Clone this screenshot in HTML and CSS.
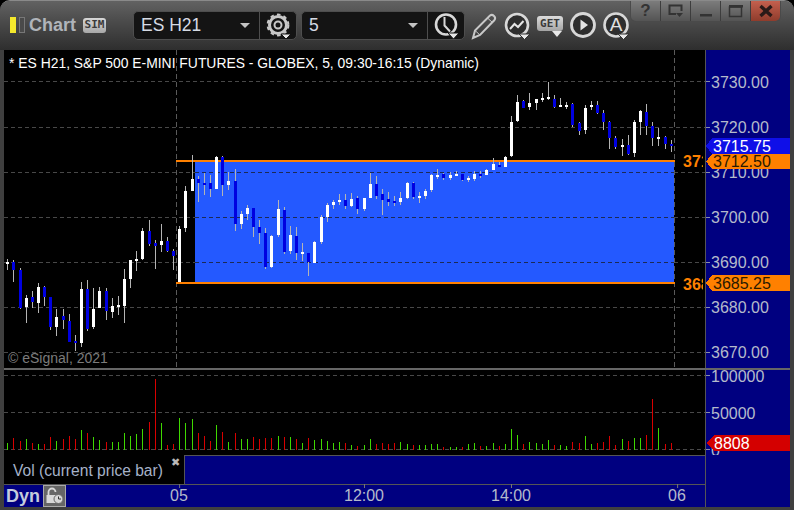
FILE: index.html
```html
<!DOCTYPE html>
<html lang="en">
<head>
<meta charset="utf-8">
<title>Chart ES H21</title>
<link rel="stylesheet" href="styles.css">
</head>
<body>
<main class="window">
  <header class="toolbar">
    <div class="brand">
      <span class="led led-on"></span>
      <span class="led"></span>
      <span class="brand-name">Chart</span>
      <span class="sim">SIM</span>
    </div>
    <div class="combo combo-symbol">
      <span class="combo-text">ES H21</span>
      <span class="caret"></span>
      <span class="combo-btn">
        <svg class="icon" width="36" height="27" viewBox="0 0 36 27">
          <circle cx="18" cy="13" r="8.500" fill="none" stroke="#c8c8c8" stroke-width="3"/>
          <circle cx="18" cy="13" r="10.400" fill="none" stroke="#c8c8c8" stroke-width="2" stroke-dasharray="3.600 3.200"/>
          <circle cx="18" cy="13" r="3.500" fill="none" stroke="#c8c8c8" stroke-width="2"/>
          <path d="M21 22h10l-5 5z" fill="#e8e8e8" stroke="#141414" stroke-width="1"/>
        </svg>
      </span>
    </div>
    <div class="combo combo-interval">
      <span class="combo-text">5</span>
      <span class="caret"></span>
      <span class="combo-btn">
        <svg class="icon" width="36" height="27" viewBox="0 0 36 27">
          <circle cx="18" cy="12.500" r="10" fill="none" stroke="#d8d8d8" stroke-width="2.600"/>
          <path d="M16.500 5v8.500l5.500 6" fill="none" stroke="#d8d8d8" stroke-width="2"/>
          <path d="M20 21h11l-5.500 6z" fill="#e8e8e8" stroke="#141414" stroke-width="1"/>
        </svg>
      </span>
    </div>
    <svg class="tool" width="28" height="28" viewBox="0 0 28 28">
      <path d="M3 26l2-7.500L20 3.500q2-1.500 4 .5t.5 4L10 23z" fill="none" stroke="#c8c8c8" stroke-width="2"/>
      <path d="M5 18.500l5 4.500M17.500 6l5 4.500" fill="none" stroke="#c8c8c8" stroke-width="1"/>
    </svg>
    <svg class="tool" width="28" height="28" viewBox="0 0 28 28">
      <circle cx="14" cy="13" r="11" fill="#2e2e2e" stroke="#d8d8d8" stroke-width="2.600"/>
      <path d="M7 17l4.500-5 3.500 3 5.500-6" fill="none" stroke="#e4e4e4" stroke-width="2"/>
      <path d="M16 22h11l-5.500 5.500z" fill="#e8e8e8" stroke="#333" stroke-width="1"/>
    </svg>
    <span class="get">
      <span class="get-text">GET</span>
      <svg class="get-arrow" width="10" height="6" viewBox="0 0 10 6"><path d="M0 0h10l-5 6z" fill="#e8e8e8"/></svg>
    </span>
    <svg class="tool" width="28" height="28" viewBox="0 0 28 28">
      <circle cx="14" cy="13" r="11.500" fill="#2e2e2e" stroke="#d8d8d8" stroke-width="2.800"/>
      <path d="M11.500 7.500l7.500 5.500-7.500 5.500z" fill="#e4e4e4"/>
    </svg>
    <span class="auto">
      <svg class="auto-ring" width="28" height="28" viewBox="0 0 28 28">
        <circle cx="14" cy="13" r="11.500" fill="#2e2e2e" stroke="#d8d8d8" stroke-width="2.600"/>
        <path d="M16 22h11l-5.500 5.500z" fill="#e8e8e8" stroke="#333" stroke-width="1"/>
      </svg>
      <span class="auto-letter">A</span>
    </span>
    <nav class="winctl">
      <span class="winbtn winbtn-text">?</span>
      <span class="winbtn">
        <svg width="16" height="14" viewBox="0 0 16 14"><path d="M8 10H1.500V1.500h12V7" fill="none" stroke="#333" stroke-width="2"/><path d="M8 9h7l-3.500 4z" fill="#333"/></svg>
      </span>
      <span class="winbtn">
        <svg width="16" height="14" viewBox="0 0 16 14"><path d="M2 10h12v2.500H2z" fill="#333"/></svg>
      </span>
      <span class="winbtn">
        <svg width="16" height="14" viewBox="0 0 16 14"><path d="M1.500 3v9.500h12V3z" fill="none" stroke="#333" stroke-width="1.500"/><path d="M1 1h14v2.500H1z" fill="#333"/></svg>
      </span>
      <span class="winbtn winbtn-close">
        <svg width="16" height="14" viewBox="0 0 16 14"><path d="M2.500 2l11 10M13.500 2l-11 10" stroke="#2a1a18" stroke-width="3.400" fill="none"/></svg>
      </span>
    </nav>
  </header>

  <section class="chart">
    <div class="pane-row pane-price">
      <svg class="plot" width="701" height="318" viewBox="4 50 701 318">
        <rect class="zone" x="195" y="162" width="479" height="120"/>
        <path class="grid" d="M4 81.500H705M4 127.500H705M4 172.500H195M674 172.500H705M4 217.500H195M674 217.500H705M4 262.500H195M674 262.500H705M4 307.500H705M4 352.500H705"/>
        <path class="grid-zone" d="M195 172.500H674M195 217.500H674M195 262.500H674"/>
        <path class="vline" d="M176.500 50V368M674.500 50V368"/>
        <rect class="level" x="176" y="160" width="499" height="2"/>
        <rect class="level" x="176" y="282" width="499" height="2"/>
        <g transform="translate(.5 160)">
          <path class="wick" d="M7 99V110M13 100V122M20 108V149M26 135V163M32 131V148M38 123V153M44 126V146M50 137V170M56 149V176M63 149V169M69 154V182M75 175V191M81 122V187M87 120V171M93 128V169M99 127V148M106 128V160M112 138V158M118 136V155M124 109V163M130 100V128M136 91V111M142 68V100M149 60V86M155 80V109M161 64V92M167 77V92M173 89V110M179 66V122M185 26V72M192 -5V31M198 16V42M204 13V35M210 15V37M216 -4V29M222 -4V36M228 12V30M235 9V71M241 51V69M247 45V60M253 48V77M259 60V84M265 68V109M271 75V108M278 40V77M284 47V94M290 66V94M296 67V100M302 83V101M308 93V116M314 81V103M321 55V84M327 43V62M333 40V49M339 34V45M345 34V49"/>
          <path class="body-up" d="M7 102V104M26 138V147M38 127V143M56 157V167M81 129V183M93 149V167M99 131V148M112 146V152M118 145V147M124 119V146M130 100V119M136 99V101M142 71V99M161 81V85M179 69V122M185 31V68M192 19V31M216 -3V29M228 21V25M241 54V64M247 48V54M271 76V107M278 49V75M290 75V91M302 92V94M314 82V103M321 57V82M327 45V57M333 42V45M339 40V42"/>
          <path class="body-down" d="M13 102V110M20 110V148M32 137V142M44 127V137M50 137V167M63 156V160M69 161V182M75 181V183M87 129V169M106 131V151M149 71V84M155 83V86M167 81V91M173 91V96M198 19V23M204 23V25M210 23V29M222 -3V25M235 21V64M253 48V67M259 67V73M265 73V107M284 50V92M296 76V93M308 93V102M345 40V46"/>
        </g>
        <g transform="translate(.5 70)">
          <path class="wick" d="M351 123V137M357 126V144M364 128V141M370 103V128M376 106V129M382 119V145M388 122V136M394 126V136M400 122V135M407 112V129M413 112V129M419 122V133M425 119V129M431 104V122M437 99V109M443 103V110M450 102V110M456 101V106M462 104V111M468 106V112M474 101V111M480 101V108M486 99V105M493 88V100M499 92V97M505 86V97M511 46V87M517 25V52M523 30V38M529 23V40M536 29V40M542 23V32M548 12V30M554 25V38M560 28V37M566 32V39M572 33V57M579 52V65M585 35V64M591 31V40M597 31V44M603 40V60M609 51V79M615 66V79M622 69V86M628 65V85M634 50V87M640 40V65M646 34V65M652 52V76M658 58V76M665 66V79M671 70V82"/>
          <path class="body-up" d="M351 129V136M364 128V139M370 114V128M400 128V132M407 113V128M419 126V128M425 121V126M431 105V120M437 105V107M450 105V108M456 104V106M468 108V110M474 104V109M486 100V105M493 94V100M505 87V97M511 52V86M517 32V51M529 33V37M536 29V33M542 28V30M548 27V29M560 35V37M566 35V37M585 38V60M591 35V37M622 75V77M634 52V83M640 41V52M658 67V69"/>
          <path class="body-down" d="M357 128V139M376 114V126M382 124V130M388 129V132M394 131V133M413 113V127M443 104V108M462 104V110M480 104V106M499 95V97M523 31V38M554 29V37M572 34V55M579 53V61M597 35V43M603 43V52M609 52V68M615 68V77M628 75V84M646 42V56M652 56V68M665 67V74M671 74V76"/>
        </g>
        <text class="chart-title" x="9" y="68">* ES H21, S&amp;P 500 E-MINI FUTURES - GLOBEX, 5, 09:30-16:15 (Dynamic)</text>
        <text class="copyright" x="8" y="363">© eSignal, 2021</text>
        <svg x="683" y="150" width="20" height="22" viewBox="683 150 20 22"><text class="level-label" x="683" y="167">3712.50</text></svg>
        <svg x="683" y="272" width="20" height="22" viewBox="683 272 20 22"><text class="level-label" x="683" y="290">3685.25</text></svg>
      </svg>
      <svg class="axis" width="84" height="318" viewBox="706 50 84 318">
        <path class="tick" d="M706 81.500h4M706 127.500h4M706 172.500h4M706 217.500h4M706 262.500h4M706 307.500h4M706 352.500h4"/>
        <text class="axis-label" x="711" y="88">3730.00</text>
        <text class="axis-label" x="711" y="133">3720.00</text>
        <text class="axis-label" x="711" y="178">3710.00</text>
        <text class="axis-label" x="711" y="223">3700.00</text>
        <text class="axis-label" x="711" y="268">3690.00</text>
        <text class="axis-label" x="711" y="313">3680.00</text>
        <text class="axis-label" x="711" y="358">3670.00</text>
        <path class="tag-blue" d="M706 146l6-8h78v16h-78z"/>
        <text class="tag-text" x="713" y="152">3715.75</text>
        <path class="tag-orange" d="M706 161.500l6-7.500h78v15h-78z"/>
        <text class="tag-text-dark" x="713" y="167">3712.50</text>
        <path class="tag-orange" d="M706 283l6-8h78v16h-78z"/>
        <text class="tag-text-dark" x="713" y="289">3685.25</text>
      </svg>
    </div>
    <div class="pane-row pane-vol">
      <svg class="plot" width="701" height="85" viewBox="4 370 701 85">
        <path class="grid" d="M4 375.500H705M4 412.500H705M4 449.500H705"/>
        <g transform="translate(.5 365)">
          <path class="vol-up" d="M7 78V85M26 74V85M38 79V85M56 76V85M81 65V85M93 72V85M99 75V85M112 77V85M118 77V85M124 68V85M130 71V85M136 69V85M142 64V85M161 58V85M179 53V85M185 58V85M192 54V85M216 60V85M228 77V85M241 74V85M247 74V85M278 71V85M290 72V85M302 78V85M314 75V85M321 74V85M327 76V85M333 78V85M339 77V85M351 80V85M364 80V85M370 74V85M400 77V85M407 79V85M419 80V85M425 80V85M431 79V85M437 79V85M450 82V85M456 82V85M468 79V85M474 78V85M486 81V85M493 78V85M505 79V85M511 64V85M517 70V85M529 77V85M536 78V85M542 79V85M548 75V85M560 80V85M566 81V85M585 71V85M591 79V85M622 74V85M634 73V85M640 73V85M658 63V85"/>
          <path class="vol-down" d="M13 73V85M20 76V85M32 78V85M44 79V85M50 72V85M63 74V85M69 71V85M75 74V85M87 68V85M106 77V85M149 57V85M155 14V85M167 80V85M173 79V85M198 68V85M204 71V85M210 76V85M222 67V85M235 68V85M253 72V85M259 74V85M265 73V85M271 73V85M284 72V85M296 74V85M308 73V85M345 78V85M357 81V85M376 79V85M382 78V85M388 79V85M394 78V85M413 80V85M443 82V85M462 82V85M480 81V85M499 81V85M523 79V85M554 80V85M572 77V85M579 78V85M597 78V85M603 77V85M609 71V85M615 80V85M628 76V85M646 70V85M652 34V85M665 79V85M671 78V85"/>
        </g>
      </svg>
      <svg class="axis" width="84" height="85" viewBox="706 370 84 85">
        <path class="tick" d="M706 375.500h4M706 412.500h4M706 449.500h4"/>
        <text class="axis-label" x="711" y="382">100000</text>
        <text class="axis-label" x="711" y="419">50000</text>
        <text class="axis-label" x="711" y="456">0</text>
        <path class="tag-red" d="M706 443l8-8h76v16h-76z"/>
        <text class="tag-text" x="714" y="449">8808</text>
      </svg>
    </div>
    <div class="legend-row">
      <div class="legend">
        <span class="legend-text">Vol (current price bar)</span>
        <span class="legend-close">✖</span>
      </div>
      <div class="legend-fill"></div>
    </div>
    <div class="time-row">
      <div class="time-plot">
        <span class="dyn">Dyn</span>
        <span class="lock">
          <svg width="20" height="18" viewBox="0 0 20 18">
            <path d="M3.500 8V5a3.500 3.500 0 0 1 7 0" fill="none" stroke="#d8d8d8" stroke-width="1.800"/>
            <path d="M1.500 8h10v8h-10z" fill="#d8d8d8"/>
            <circle cx="13.500" cy="12" r="4.500" fill="#d8d8d8" stroke="#666" stroke-width="1"/>
            <path d="M13.500 9.500V12h2.500" fill="none" stroke="#333" stroke-width="1"/>
          </svg>
        </span>
        <span class="time-label time-05">05</span>
        <span class="time-label time-12">12:00</span>
        <span class="time-label time-14">14:00</span>
        <span class="time-label time-06">06</span>
      </div>
    </div>
  </section>
</main>
</body>
</html>
```
FILE: styles.css
```css
* { box-sizing: border-box; }
html, body { margin: 0; padding: 0; background: #000; }
body { width: 794px; height: 510px; overflow: hidden; font-family: "Liberation Sans", Arial, sans-serif; }

.window {
  width: 794px;
  height: 510px;
  background: #3f3f3f;
  border-radius: 10px 10px 0 0;
  display: flex;
  flex-direction: column;
  overflow: hidden;
  border-top: 1px solid #8a8a8a;
}

.toolbar {
  height: 49px;
  flex: none;
  display: flex;
  align-items: flex-start;
  position: relative;
  padding: 10px 0 0 10px;
  background: linear-gradient(#626262 0, #4e4e4e 36%, #2e2e2e 100%);
}

.brand { display: flex; align-items: center; height: 28px; width: 123px; flex: none; }
.led { width: 6px; height: 16px; background: #4a4a4a; border: 1px solid #777; margin-right: 3px; }
.led-on { background: #f4e82c; border-color: #f4e82c; }
.brand-name { font-weight: 700; font-size: 18px; color: #b0b4ba; margin-left: 1px; width: 54px; }
.sim {
  font-family: "DejaVu Sans Mono", monospace;
  font-weight: 700;
  font-size: 11px;
  line-height: 14px;
  width: 23px;
  height: 15px;
  text-align: center;
  color: #3a3a3a;
  background: linear-gradient(#d6d6d6, #a8a8a8);
  border-radius: 3px;
}

.combo {
  height: 29px;
  flex: none;
  display: flex;
  align-items: center;
  background: #141414;
  border: 1px solid #4e4e4e;
  border-radius: 5px;
  color: #d6dbe4;
  font-size: 17.500px;
}
.combo-symbol { width: 164px; margin-right: 4px; }
.combo-interval { width: 164px; margin-right: 5px; }
.combo-text { padding-left: 7px; flex: 1; }
.caret {
  width: 0; height: 0; margin-right: 9px;
  border-left: 5px solid transparent;
  border-right: 5px solid transparent;
  border-top: 5px solid #c4c4c4;
}
.combo-btn { height: 27px; display: flex; align-items: center; border-left: 1px solid #4e4e4e; }
.icon { display: block; }

.tool { flex: none; margin-right: 5px; margin-top: 1px; display: block; }
.get {
  width: 28px; height: 28px; flex: none; margin-right: 5px; margin-top: 1px;
  display: flex; flex-direction: column; align-items: center;
}
.get-text {
  margin-top: 4px;
  width: 26px; height: 15px;
  background: linear-gradient(#dcdcdc, #a4a4a4);
  border-radius: 3px;
  font-family: "DejaVu Sans Mono", monospace;
  font-size: 11px; font-weight: 700; line-height: 15px;
  text-align: center; color: #3a3a3a;
}
.get-arrow { display: block; margin-left: 14px; }
.auto { width: 28px; height: 28px; flex: none; position: relative; margin-top: 1px; }
.auto-ring { display: block; }
.auto-letter {
  position: absolute; left: 6px; top: 3px; width: 16px; text-align: center;
  color: #e0e0e0; font-size: 19px; line-height: 20px;
}

.winctl {
  position: absolute;
  right: 13px;
  top: 0;
  display: flex;
  height: 21px;
  width: 151px;
  border: 1px solid #4a4a4a;
  border-top: 0;
  border-radius: 0 0 6px 6px;
  overflow: hidden;
}
.winbtn {
  flex: 1;
  display: flex;
  align-items: center;
  justify-content: center;
  background: linear-gradient(#7c7c7c, #545454);
  border-left: 1px solid #3d3d3d;
}
.winbtn:first-child { border-left: 0; }
.winbtn-text { color: #333; font-weight: 700; font-size: 17px; }
.winbtn-close { background: linear-gradient(#c4604e, #8f3c2c); }

.chart { flex: 1; padding: 0 4px 4px; display: flex; flex-direction: column; }
.pane-row { display: flex; flex: none; background: #000; }
.pane-price { height: 318px; }
.pane-vol { height: 87px; border-top: 2px solid #666; }
.plot { display: block; flex: none; box-sizing: content-box; shape-rendering: crispEdges; background: #000; border-right: 1px solid #555; }
.axis { display: block; flex: none; background: #000080; shape-rendering: crispEdges; }

.zone { fill: #2459ff; }
.grid { stroke: #484848; stroke-width: 1; stroke-dasharray: 4 3; fill: none; }
.grid-zone { stroke: #1c2a55; stroke-width: 1; stroke-dasharray: 4 3; fill: none; }
.vline { stroke: #5a5a5a; stroke-width: 1; stroke-dasharray: 5 3; fill: none; }
.level { fill: #ff8000; }
.wick { stroke: #b4b4b4; stroke-width: 1; fill: none; }
.body-up { stroke: #fff; stroke-width: 3; fill: none; }
.body-down { stroke: #0000e0; stroke-width: 3; fill: none; }
.vol-up { stroke: #3fd800; stroke-width: 1; fill: none; }
.vol-down { stroke: #d80000; stroke-width: 1; fill: none; }
.tick { stroke: #8a8fa8; stroke-width: 1; fill: none; }

.chart-title { fill: #fff; font-size: 13.900px; }
.copyright { fill: #7c7c7c; font-size: 14px; }
.level-label { fill: #ff8000; font-size: 16px; font-weight: 700; }
.axis-label { fill: #b4bacb; font-size: 16px; }
.tag-blue { fill: #0f0fe8; }
.tag-orange { fill: #ff8000; }
.tag-red { fill: #d40000; }
.tag-text { fill: #fff; font-size: 16px; }
.tag-text-dark { fill: #2a1a00; font-size: 16px; }

.legend-row { display: flex; height: 29px; flex: none; background: #000080; }
.legend { width: 181px; background: #000; position: relative; padding: 7px 0 0 9px; color: #a6b2c8; font-size: 15.600px; line-height: 18px; border-right: 1px solid #555; }
.legend-close { position: absolute; left: 167px; top: 1px; color: #b8b8b8; font-size: 11px; line-height: 14px; font-family: "DejaVu Sans", sans-serif; }
.legend-fill { flex: 1; border-top: 1px solid #555; border-right: 1px solid #555; margin-right: 84px; }

.time-row { flex: 1; display: flex; background: #000080; }
.time-plot { width: 702px; position: relative; border-top: 1px solid #555; border-right: 1px solid #555; display: flex; align-items: center; }
.dyn { color: #c4ccdc; font-weight: 700; font-size: 18px; margin-left: 2px; }
.lock { display: flex; align-items: center; justify-content: center; width: 23px; height: 22px; background: #666; border: 1px solid #aaa; margin-left: 3px; }
.time-label { position: absolute; top: 2px; color: #b4bacb; font-size: 16px; line-height: 18px; transform: translateX(-50%); }
.time-label::before { content: ""; position: absolute; left: 50%; top: -3px; width: 1px; height: 4px; background: #777; }
.time-05 { left: 175px; }
.time-12 { left: 360px; }
.time-14 { left: 507px; }
.time-06 { left: 673px; }
```
